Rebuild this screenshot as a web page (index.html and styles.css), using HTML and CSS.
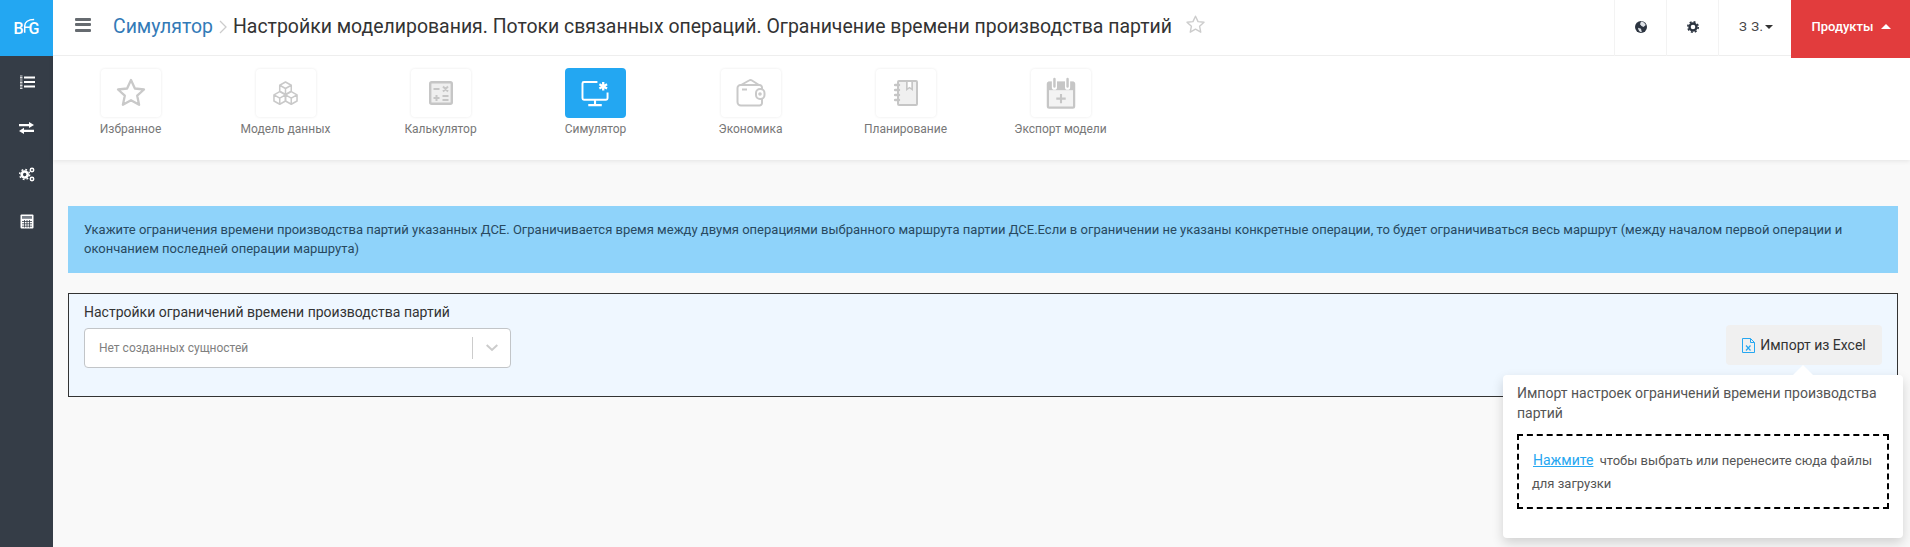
FILE: index.html
```html
<!DOCTYPE html>
<html lang="ru">
<head>
<meta charset="utf-8">
<title>Симулятор</title>
<link rel="stylesheet" href="styles.css">
</head>
<body>
<div class="app">
  <aside class="sidebar">
    <div class="logo">B<svg class="logo-mark" viewBox="0 0 14 18" width="12" height="16"><path d="M2 17V9C2 4.500 6 1.500 13 1.500M2 10.500h6" fill="none" stroke="#fff" stroke-width="1.700"/></svg>G</div>
    <nav class="side-nav">
      <a class="side-link"><svg viewBox="0 0 16 14" width="16" height="14"><path d="M5 2.500h11M5 7h11M5 11.500h11" stroke="#fff" stroke-width="1.800"/><path d="M1 1h2.500M1 2.500h2.500M1 4h2.500M1 6h2.500M1 7.500h2.500M1 9h2.500M1 10.500h2.500M1 12h2.500M1 13.500h2.500" stroke="#fff" stroke-width=".8"/></svg></a>
      <a class="side-link"><svg viewBox="0 0 15 12" width="15" height="12"><path d="M0 2h10V0l5 3-5 3V4.200H0zM15 7.800H5V5.800L0 8.900 5 12V10H15z" fill="#fff"/></svg></a>
      <a class="side-link"><svg viewBox="0 0 16 15" width="16" height="15"><circle cx="5.700" cy="7.500" r="3" fill="none" stroke="#fff" stroke-width="2.600"/><circle cx="5.700" cy="7.500" r="5" fill="none" stroke="#fff" stroke-width="1.400" stroke-dasharray="1.800 2.130"/><circle cx="13" cy="3" r="1.700" fill="none" stroke="#fff" stroke-width="1.500"/><circle cx="13" cy="12" r="1.700" fill="none" stroke="#fff" stroke-width="1.500"/></svg></a>
      <a class="side-link"><svg viewBox="0 0 14 15" width="14" height="15"><rect x=".5" y=".5" width="13" height="14" rx="1" fill="#fff"/><rect x="2" y="2" width="10" height="2.800" fill="#7a818a"/><path d="M2 7.500h10M2 9.800h10M2 12.200h10M4.500 6v7.500M7 6v7.500M9.500 6v7.500" stroke="#353d47" stroke-width=".8"/></svg></a>
    </nav>
  </aside>
  <main class="main">
    <header class="topbar">
      <button class="burger"><span></span><span></span><span></span></button>
      <div class="crumbs">
        <a class="crumb-link">Симулятор</a>
        <svg class="crumb-sep" viewBox="0 0 8 14" width="8" height="14"><path d="M1 1l6 6-6 6" fill="none" stroke="#ccc" stroke-width="1.300"/></svg>
        <span class="crumb-title">Настройки моделирования. Потоки связанных операций. Ограничение времени производства партий</span>
        <svg class="crumb-star" viewBox="0 0 24 24" width="21" height="21"><path d="M12 2.500l2.900 6.200 6.800.8-5 4.600 1.300 6.700-6-3.400-6 3.400 1.300-6.700-5-4.600 6.800-.8z" fill="none" stroke="#ccc" stroke-width="1.600" stroke-linejoin="round"/></svg>
      </div>
      <div class="top-actions">
        <div class="top-cell"><svg viewBox="0 0 12 12" width="12" height="12"><circle cx="6" cy="6" r="6" fill="#2c3440"/><path d="M6 .5c2 .2 4 1.500 4.800 3.500L8.500 6 6.500 5 5 3.200zM3 6.800l3 1 .8 3.300C5 11.500 3.500 10 3 6.800z" fill="#dfe3e8"/></svg></div>
        <div class="top-cell"><svg viewBox="0 0 12 12" width="12" height="12"><circle cx="6" cy="6" r="3.500" fill="none" stroke="#2c3440" stroke-width="2.400"/><circle cx="6" cy="6" r="5.200" fill="none" stroke="#2c3440" stroke-width="1.600" stroke-dasharray="2 2.080"/></svg></div>
        <div class="top-cell user">З З.<span class="caret-down"></span></div>
        <button class="products">Продукты<span class="caret-up"></span></button>
      </div>
    </header>
    <section class="modules">
      <a class="module"><span class="tile"><svg viewBox="0 0 32 32" width="32" height="32"><path d="M16 3l3.900 8.500 9.100 1-6.800 6.200 1.900 9.100-8.100-4.600-8.100 4.600 1.900-9.100L3 12.500l9.100-1z" fill="none" stroke="#c9c9c9" stroke-width="2.300" stroke-linejoin="round"/></svg></span><span class="module-name">Избранное</span></a>
      <a class="module"><span class="tile"><svg viewBox="0 0 28 26" width="27" height="25" fill="none" stroke="#c9c9c9" stroke-width="1.600" stroke-linejoin="round"><path d="M14 1l6 3.400v6.200l-6 3.400-6-3.400V4.400zM8 4.400l6 3.400 6-3.400M14 7.800V14"/><path d="M8 11l6 3.400v6.400L8 24.200l-6-3.400v-6.400zM2 14.400l6 3.400 6-3.400M8 17.800v6.400"/><path d="M20 11l6 3.400v6.400l-6 3.400-6-3.400v-6.400zM14 14.400l6 3.400 6-3.400M20 17.800v6.400"/></svg></span><span class="module-name">Модель данных</span></a>
      <a class="module"><span class="tile"><svg viewBox="0 0 24 24" width="24" height="24"><rect x="1.200" y="1.200" width="21.600" height="21.600" rx="1.500" fill="#efefef" stroke="#c6c6c6" stroke-width="2.400"/><path d="M4.500 8h6M14 5.500l5 5M19 5.500l-5 5M4.500 17h6M7.500 14v6M13.500 15h6M13.500 19h6" stroke="#c6c6c6" stroke-width="2"/></svg></span><span class="module-name">Калькулятор</span></a>
      <a class="module"><span class="tile tile-active"><svg viewBox="0 0 30 28" width="29" height="27" fill="none" stroke="#fff" stroke-width="2"><path d="M17 2H3a1.500 1.500 0 0 0-1.500 1.500V19A1.500 1.500 0 0 0 3 20.500h23a1.500 1.500 0 0 0 1.500-1.500v-6"/><path d="M14.500 20.500v5M7.500 26h14" stroke-width="2.200"/><path d="M23 2v9M19 4.300l8 4.500M27 4.300l-8 4.500" stroke-width="2.400"/></svg></span><span class="module-name">Симулятор</span></a>
      <a class="module"><span class="tile"><svg viewBox="0 0 30 28" width="30" height="28" fill="none" stroke="#c9c9c9" stroke-width="2"><path d="M5 6l8-4.500c1-.6 2-.6 3 0l7 4.500"/><path d="M26 10V8.500A2.500 2.500 0 0 0 23.500 6h-19A3 3 0 0 0 1.500 9v14A3.500 3.500 0 0 0 5 26.500h18.500a2.500 2.500 0 0 0 2.500-2.500V20"/><path d="M6 10.500h5"/><rect x="20" y="10" width="8.500" height="10" rx="4"/><circle cx="24" cy="15" r=".8"/></svg></span><span class="module-name">Экономика</span></a>
      <a class="module"><span class="tile"><svg viewBox="0 0 24 26" width="24" height="26"><rect x="4" y="1" width="19" height="24" rx="1" fill="#f0f0f0" stroke="#c6c6c6" stroke-width="2"/><path d="M12 1h7v10l-3.500-2.500L12 11z" fill="#c6c6c6"/><path d="M13.700 2h3.600v6l-1.800-1.300-1.800 1.300z" fill="#fff"/><path d="M1 5h4M1 10h4M1 15h4M1 20h4" stroke="#c6c6c6" stroke-width="2.400" stroke-linecap="round"/></svg></span><span class="module-name">Планирование</span></a>
      <a class="module"><span class="tile"><svg viewBox="0 0 32 34" width="30" height="32" fill="none"><path d="M2 7.500A1.500 1.500 0 0 1 3.500 6H28.500A1.500 1.500 0 0 1 30 7.500V31a1.500 1.500 0 0 1-1.500 1.500h-25A1.500 1.500 0 0 1 2 31z" fill="#f3f3f3" stroke="#c6c6c6" stroke-width="2.400"/><path d="M2 5h28v9H2z" fill="#c6c6c6"/><path d="M9 1.800v9M23 1.800v9" stroke="#fff" stroke-width="5.500" stroke-linecap="round"/><path d="M9 2v8M23 2v8" stroke="#c6c6c6" stroke-width="2.600" stroke-linecap="round"/><path d="M16 18v10M11 23h10" stroke="#c6c6c6" stroke-width="2.200"/></svg></span><span class="module-name">Экспорт модели</span></a>
    </section>
    <section class="content">
      <div class="alert">Укажите ограничения времени производства партий указанных ДСЕ. Ограничивается время между двумя операциями выбранного маршрута партии ДСЕ.Если в ограничении не указаны конкретные операции, то будет ограничиваться весь маршрут (между началом первой операции и окончанием последней операции маршрута)</div>
      <div class="panel">
        <div class="panel-form">
          <label class="panel-label">Настройки ограничений времени производства партий</label>
          <div class="select">
            <span class="select-value">Нет созданных сущностей</span>
            <span class="select-divider"></span>
            <svg class="select-chevron" viewBox="0 0 12 8" width="12" height="8"><path d="M.7 1l5.300 5 5.300-5" fill="none" stroke="#cccccc" stroke-width="2"/></svg>
          </div>
        </div>
        <div class="import-wrap">
          <button class="import-btn"><svg viewBox="0 0 13 15" width="13" height="15" fill="none" stroke="#26a7f1"><path d="M.5.5h8l4 4v10H.5zM8.500.5v4h4"/><path d="M4 7.500l4.500 5M8.500 7.500L4 12.500" stroke-width="1.200"/></svg>Импорт из Excel</button>
          <div class="popover">
            <div class="popover-title">Импорт настроек ограничений времени производства партий</div>
            <div class="dropzone"><a class="drop-link">Нажмите</a> чтобы выбрать или перенесите сюда файлы для загрузки</div>
          </div>
        </div>
      </div>
    </section>
  </main>
</div>
</body>
</html>
```
FILE: styles.css
```css
* { box-sizing: border-box; }
html, body { margin: 0; height: 100%; }
body { font-family: Roboto, "Liberation Sans", sans-serif; color: #333; overflow: hidden; }
a { text-decoration: none; }
button { font-family: inherit; border: 0; padding: 0; }

.app { display: flex; height: 547px; }

.sidebar { width: 53px; flex: none; background: #353d47; }
.logo { height: 56px; background: #23a7f2; color: #fff; font-size: 16px; font-weight: 500; display: flex; align-items: center; justify-content: center; }
.logo-mark { margin: -5px -6px 0 -1px; }
.side-nav { display: flex; flex-direction: column; padding-top: 18px; gap: 30.400px; align-items: center; }
.side-link { display: flex; align-items: center; justify-content: center; width: 16px; height: 16px; }

.main { flex: 1; min-width: 0; background: #f9f9f9; display: flex; flex-direction: column; }

.topbar { height: 56px; flex: none; background: #fff; border-bottom: 1px solid #eeeeee; display: flex; align-items: center; position: relative; z-index: 3; }
.burger { width: 16px; height: 14px; margin: -6px 0 0 22px; background: none; display: flex; flex-direction: column; justify-content: space-between; }
.burger span { display: block; height: 3px; background: #666b70; border-radius: 1px; }
.crumbs { display: flex; align-items: center; margin: -2px 0 0 22px; font-size: 19.460px; white-space: nowrap; }
.crumb-link { color: #337ab7; }
.crumb-sep { margin: 0 6px 0 6px; }
.crumb-title { color: #333; }
.crumb-star { margin: -4px 0 0 13px; }
.top-actions { margin-left: auto; display: flex; align-self: flex-start; height: 56px; }
.top-cell { width: 52px; border-left: 1px solid #f3f3f3; display: flex; align-items: center; justify-content: center; padding-bottom: 3px; }
.top-cell.user { width: 73px; font-size: 13px; color: #444; letter-spacing: .6px; justify-content: flex-start; padding-left: 20px; }
.caret-down { display: inline-block; border: 4px solid transparent; border-top-color: #333; border-bottom: 0; margin-left: 1px; }
.products { width: 119px; height: 58px; background: #e23c3d; color: #fff; font-size: 13px; font-weight: 500; display: flex; align-items: center; justify-content: center; padding: 0 0 6px 2px; }
.caret-up { display: inline-block; border: 5px solid transparent; border-bottom-color: #fff; border-top: 0; margin-left: 8px; }

.modules { height: 104px; flex: none; background: #fff; box-shadow: 0 1px 5px rgba(0,0,0,.09); display: flex; padding-top: 12px; position: relative; z-index: 2; }
.module { width: 155px; display: flex; flex-direction: column; align-items: center; }
.tile { width: 60px; height: 48px; background: #fff; border-radius: 4px; box-shadow: 0 0 3px rgba(0,0,0,.09); display: flex; align-items: center; justify-content: center; margin-top: 1px; }
.tile-active { background: #23a7f2; width: 61px; height: 50px; margin-top: 0; box-shadow: none; }
.module-name { font-size: 12px; color: #777; line-height: 16px; margin-top: 4px; white-space: nowrap; }
.tile-active + .module-name { margin-top: 3px; }

.content { flex: 1; padding: 46px 12px 0 15px; }
.alert { height: 67px; background: #8fd3fa; color: #28495f; font-size: 13px; line-height: 18.570px; padding: 15px 16px 0; }
.panel { height: 104px; margin-top: 20px; background: #eff7ff; border: 1px solid #333; display: flex; justify-content: space-between; padding: 8px 15px 0; }
.panel-form { width: 427px; }
.panel-label { display: block; font-size: 14px; line-height: 20px; color: #333; }
.select { height: 40px; margin-top: 6px; background: #fff; border: 1px solid #c2c5c8; border-radius: 4px; display: flex; align-items: center; padding-left: 14px; }
.select-value { flex: 1; font-size: 12px; color: #808080; }
.select-divider { width: 1px; height: 22px; background: #ccc; }
.select-chevron { margin: 0 12px 0 13px; }
.import-wrap { position: relative; margin-top: 23px; }
.import-btn { width: 156px; height: 40px; background: #f0f0f0; border-radius: 4px; font-size: 14px; color: #333; display: flex; align-items: center; justify-content: center; gap: 5px; }
.popover { position: absolute; left: -223px; top: 50px; width: 400px; height: 163px; background: #fff; border-radius: 4px; box-shadow: 0 5px 12px rgba(0,0,0,.16); padding: 8px 14px 0; z-index: 5; }
.popover::before { content: ""; position: absolute; top: -10px; left: 290px; border: 10px solid transparent; border-top: 0; border-bottom-color: #fff; }
.popover-title { font-size: 14px; line-height: 20px; color: #555; }
.dropzone { margin-top: 11px; height: 75px; border: 2px dashed #000; padding: 13px 13px 0; font-size: 13px; line-height: 23px; color: #555; width: 372px; }
.drop-link { color: #26a7f1; text-decoration: underline; font-size: 14px; margin: 0 3px 0 1px; }
```
